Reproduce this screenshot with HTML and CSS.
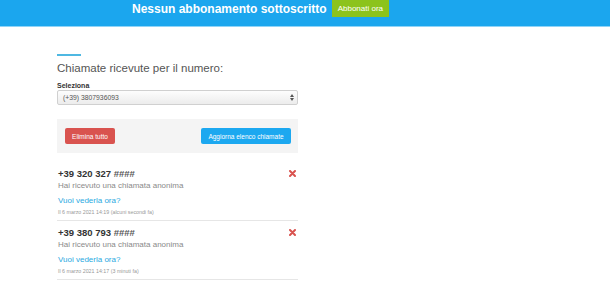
FILE: index.html
```html
<!DOCTYPE html>
<html lang="it">
<head>
  <meta charset="UTF-8">
  <meta name="viewport" content="width=device-width, initial-scale=1.0">
  <title>Chiamate ricevute</title>
  <link rel="stylesheet" href="styles.css">
</head>
<body>

<div class="topbar">
  <span class="topbar-title">Nessun abbonamento sottoscritto</span>
  <a class="btn-sub" href="#">Abbonati ora</a>
</div>

<div class="container">
  <div class="accent"></div>
  <h2 class="title">Chiamate ricevute per il numero:</h2>
  <label class="label" for="numero">Seleziona</label>
  <div class="select">
    <span>(+39) 3807936093</span>
    <svg width="4" height="7" viewBox="0 0 4 7"><path d="M0 3 L2 0 L4 3 Z M0 4 L2 7 L4 4 Z" fill="#555"/></svg>
  </div>

  <div class="toolbar">
    <button class="btn btn-red">Elimina tutto</button>
    <button class="btn btn-blue">Aggiorna elenco chiamate</button>
  </div>

  <ul class="calls">
    <li class="call">
      <div class="call-head">
        <span class="call-number">+39 320 327 <em>####</em></span>
        <svg class="call-del" width="7" height="7" viewBox="0 0 7 7"><path d="M1 1 L6 6 M6 1 L1 6" stroke="#d9534f" stroke-width="2" stroke-linecap="round"/></svg>
      </div>
      <p class="call-text">Hai ricevuto una chiamata anonima</p>
      <a class="call-link" href="#">Vuoi vederla ora?</a>
      <p class="call-date">Il 6 marzo 2021 14:19 (alcuni secondi fa)</p>
    </li>
    <li class="call">
      <div class="call-head">
        <span class="call-number">+39 380 793 <em>####</em></span>
        <svg class="call-del" width="7" height="7" viewBox="0 0 7 7"><path d="M1 1 L6 6 M6 1 L1 6" stroke="#d9534f" stroke-width="2" stroke-linecap="round"/></svg>
      </div>
      <p class="call-text">Hai ricevuto una chiamata anonima</p>
      <a class="call-link" href="#">Vuoi vederla ora?</a>
      <p class="call-date">Il 6 marzo 2021 14:17 (3 minuti fa)</p>
    </li>
  </ul>
</div>

</body>
</html>
```

FILE: styles.css
```css
* {
  box-sizing: border-box;
  margin: 0;
  padding: 0;
  font-family: 'Liberation Sans', Arial, sans-serif;
}

body {
  background: #fff;
  color: #333;
}

.topbar {
  height: 27px;
  background: #1ba6ee;
  border-bottom: 1px solid #8fd4f8;
  display: flex;
  align-items: flex-start;
  padding-left: 132px;
}

.topbar-title {
  color: #fff;
  font-weight: bold;
  font-size: 12px;
  line-height: 17px;
  padding-top: 1px;
}

.btn-sub {
  margin-left: 5px;
  height: 17px;
  padding: 0 6px;
  background: #8cc31c;
  color: #fff;
  font-size: 8px;
  line-height: 17px;
  text-decoration: none;
}

.container {
  width: 241px;
  margin-left: 57px;
  padding-top: 27px;
}

.accent {
  width: 24px;
  height: 2px;
  background: #4fb8e2;
}

.title {
  margin-top: 5px;
  font-size: 11.5px;
  line-height: 14px;
  font-weight: normal;
  color: #555;
}

.label {
  display: block;
  margin-top: 6px;
  font-size: 7px;
  line-height: 9px;
  font-weight: bold;
  color: #333;
}

.select {
  height: 15px;
  border: 1px solid #d0d0d0;
  border-radius: 2px;
  background: linear-gradient(#fdfdfd, #ececec);
  display: flex;
  justify-content: space-between;
  align-items: center;
  padding: 0 3px 0 5px;
  font-size: 6.8px;
  color: #555;
}

.toolbar {
  margin-top: 14px;
  height: 34px;
  background: #f4f4f4;
  display: flex;
  justify-content: space-between;
  align-items: center;
  padding: 0 7px 0 8px;
}

.btn {
  height: 16px;
  padding: 0 7px;
  border: none;
  border-radius: 2px;
  color: #fff;
  font-size: 6.5px;
}

.btn-red {
  width: 50px;
  background: #d9534f;
}

.btn-blue {
  width: 90px;
  background: #1ca8f0;
}

.calls {
  list-style: none;
  margin-top: 9px;
}

.call {
  padding: 5.5px 0 4px 1px;
  border-bottom: 1px solid #e6e6e6;
}

.call-head {
  display: flex;
  justify-content: space-between;
  align-items: center;
  height: 12px;
  padding-right: 2px;
}

.call-number {
  font-size: 9.5px;
  line-height: 12px;
  font-weight: bold;
  color: #333;
}

.call-number em {
  font-style: normal;
  color: #555;
}

.call-text {
  font-size: 8px;
  line-height: 12px;
  color: #8a8a8a;
}

.call-link {
  display: block;
  margin-top: 3px;
  font-size: 8px;
  line-height: 12px;
  color: #29a9e1;
  text-decoration: none;
}

.call-date {
  margin-top: 1.5px;
  font-size: 5.3px;
  line-height: 8px;
  color: #999;
}
```
